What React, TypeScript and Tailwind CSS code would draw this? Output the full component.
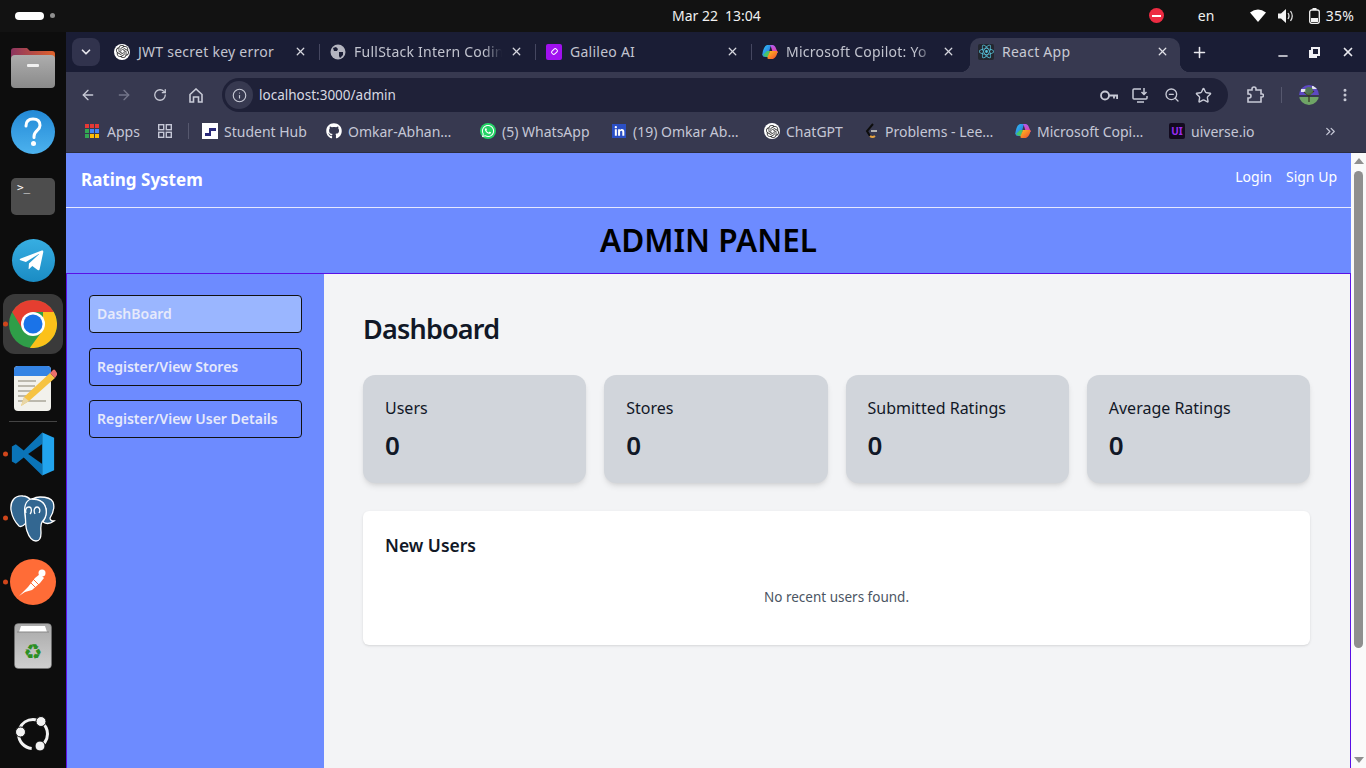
import React from "react";
import { ArrowLeft, ArrowRight, RotateCw, Info, Star, Plus, X, Minus, ChevronDown, ChevronsRight, EllipsisVertical, ZoomOut } from "lucide-react";
import { FaGithub, FaWhatsapp, FaTelegramPlane } from "react-icons/fa";
import { FaLinkedinIn } from "react-icons/fa6";
import { SiOpenai, SiReact } from "react-icons/si";

function Copilot({ size = 16 }: { size?: number }) {
  return (
    <svg width={size} height={size} viewBox="0 0 16 16">
      <defs>
        <linearGradient id="cpa" x1="0" y1="0" x2="1" y2="1"><stop offset="0" stopColor="#2fc6f2" /><stop offset="1" stopColor="#2a5fe0" /></linearGradient>
        <linearGradient id="cpb" x1="0" y1="0" x2="0" y2="1"><stop offset="0" stopColor="#b05cf0" /><stop offset="1" stopColor="#ec3d9e" /></linearGradient>
        <linearGradient id="cpc" x1="0" y1="0" x2="1" y2="1"><stop offset="0" stopColor="#ffc220" /><stop offset="1" stopColor="#f0492e" /></linearGradient>
      </defs>
      <path d="M5 1h4L7 8 5.500 13H3Q.5 13 .3 10.500 1.500 2 5 1Z" fill="url(#cpa)" />
      <path d="M1 11 5 7h3l-2 6Q3 13.500 1 11Z" fill="#46c46b" />
      <path d="M8 1h2.500Q13 1 14 4.500L16 9 11 9 9 3Z" fill="url(#cpb)" />
      <path d="M8 7h7.500Q15 13 11 15H6.500Q5 15 5.500 13Z" fill="url(#cpc)" />
    </svg>
  );
}

function OpenAi() {
  return (
    <span className="flex h-4 w-4 shrink-0 items-center justify-center rounded-full bg-white text-[#333]">
      <SiOpenai size={13} />
    </span>
  );
}

function Tab({ icon, title, fade, noSep }: { icon: React.ReactNode; title: string; fade?: boolean; noSep?: boolean }) {
  return (
    <div className="flex h-full w-[216px] shrink-0 items-center pb-[7px] pl-2 pr-[3px] text-[#c2c4cf]">
      <span className="flex w-4 shrink-0 items-center justify-center">{icon}</span>
      <span className={"ml-2 w-[148px] shrink-0 whitespace-nowrap text-[14px] tracking-[0.25px] " + (fade ? "[mask-image:linear-gradient(to_right,black_88%,transparent)]" : "")}>{title}</span>
      <X size={13} strokeWidth={2.4} className="ml-2 shrink-0 text-[#d5d6de]" />
      {!noSep && <span className="ml-[12px] h-[16px] w-px shrink-0 bg-[#454760]" />}
    </div>
  );
}

function Dot() {
  return <span className="absolute left-[3px] top-1/2 h-[5px] w-[5px] -translate-y-1/2 rounded-full bg-[#d0461b]" />;
}

function Slot({ children, dot }: { children: React.ReactNode; dot?: boolean }) {
  return (
    <div className="relative flex h-[64px] w-full shrink-0 items-center justify-center">
      {dot && <Dot />}
      {children}
    </div>
  );
}

function Dock() {
  return (
    <div className="flex w-[66px] shrink-0 flex-col bg-[#0d0d0d] pt-1">
      <Slot>
        <svg width="46" height="42" viewBox="0 0 46 42">
          <defs>
            <linearGradient id="fdt" x1="0" y1="0" x2="1" y2="0"><stop offset="0" stopColor="#8c3560" /><stop offset="1" stopColor="#e0622a" /></linearGradient>
            <linearGradient id="fdb" x1="0" y1="0" x2="0" y2="1"><stop offset="0" stopColor="#adadad" /><stop offset="1" stopColor="#8a8a8a" /></linearGradient>
          </defs>
          <path d="M4 1h13l3 3h22q3 0 3 3v12H1V4q0-3 3-3Z" fill="url(#fdt)" />
          <rect x="1" y="8" width="44" height="33" rx="4" fill="url(#fdb)" />
          <rect x="17" y="17" width="12" height="3" rx="1" fill="#f1f1f1" />
        </svg>
      </Slot>
      <Slot>
        <svg width="44" height="44" viewBox="0 0 44 44">
          <defs>
            <linearGradient id="hlp" x1="0" y1="0" x2="0" y2="1"><stop offset="0" stopColor="#2389d6" /><stop offset="1" stopColor="#4cb2ee" /></linearGradient>
          </defs>
          <circle cx="22" cy="22" r="22" fill="url(#hlp)" />
          <path d="M15 16q0-7 7-7t7 6.500c0 5-6 5-6 11v1" fill="none" stroke="#fff" strokeWidth="3" strokeLinecap="round" />
          <circle cx="22.500" cy="33.500" r="2.500" fill="#fff" />
        </svg>
      </Slot>
      <Slot>
        <div className="flex h-[37px] w-[44px] items-start rounded-[5px] bg-[#4d4d4d] px-[6px] pt-[3px] text-[11px] leading-[14px] text-white [font-family:'DejaVu_Sans_Mono',monospace]">&gt;_</div>
      </Slot>
      <Slot>
        <div className="flex h-[43px] w-[43px] items-center justify-center rounded-full bg-gradient-to-b from-[#37aee2] to-[#1a8cc4] text-white">
          <FaTelegramPlane size={27} className="-ml-1" />
        </div>
      </Slot>
      <Slot dot>
        <div className="flex h-[60px] w-[60px] items-center justify-center rounded-xl bg-[#3a3a3a]">
          <svg width="48" height="48" viewBox="0 0 48 48">
            <circle cx="24" cy="24" r="24" fill="#2f9e48" />
            <path d="M34 12H44.800A24 24 0 0 1 20.900 47.800L34 30Z" fill="#fcc11a" />
            <path d="M24 0A24 24 0 0 1 44.800 12H24L14 30 3.200 12A24 24 0 0 1 24 0Z" fill="#e53e30" />
            <circle cx="24" cy="24" r="12" fill="#fff" />
            <circle cx="24" cy="24" r="9.500" fill="#1a73e8" />
          </svg>
        </div>
      </Slot>
      <Slot>
        <svg className="ml-[4px]" width="44" height="46" viewBox="0 0 44 46">
          <rect x="1" y="1" width="37" height="45" rx="4" fill="#f2f1ec" />
          <path d="M5 1h29q4 0 4 4v6H1V5q0-4 4-4Z" fill="#3584e4" />
          <path d="M5 16h18M5 21h17M5 26h14M5 31h10M5 36h10M14 36h19" stroke="#bcb9ae" strokeWidth="2" />
          <path d="M37 8 42 13 16 36 8 41l3-9Z" fill="#f6c342" />
          <path d="M37 8l3-3q1-1 2 0l2 3q1 1 0 2l-2 3Z" fill="#ed6f6b" />
          <path d="M11 32l5 4-8 5Z" fill="#e8d6a8" />
        </svg>
      </Slot>
      <div className="mx-auto h-px w-[48px] shrink-0 bg-[#444] my-[0.5px]" />
      <Slot dot>
        <svg width="44" height="44" viewBox="0 0 100 100">
          <path d="M71 1 29 42 11 28l-9 5v34l9 5 18-14 42 41Z" fill="#0a74b8" />
          <path d="M71 27v46L39 50Z" fill="#0d0d0d" />
          <path d="M71 1 98 13v74L71 99Z" fill="#22a4ee" />
        </svg>
      </Slot>
      <Slot dot>
        <svg width="48" height="49" viewBox="0 0 48 49" stroke="#fff" strokeWidth="1.300" fill="#336791">
          <path d="M14 2C6 1 1 7 2 16c1 6 4 12 8 16 3 2 5-1 7-3l-1-10c0-6 2-10 6-13C20 4 17 2 14 2Z" />
          <path d="M31 3c-3 0-6 1-8 2 6 0 12 3 14 10 1 5-1 9-3 13 3 2 7 2 11-1-3 0-4-1-4-3 3-5 5-11 3-16-2-4-7-5-13-5Z" />
          <path d="M22 5c-6 2-7 9-6 14 1 6 0 13 2 18 2 6 5 10 9 10s5-4 5-8c0-4-1-8 1-11 3-3 5-8 4-13-1-6-5-10-15-10Z" />
          <path d="M17 19c-1-3 0-6 3-6s3 5 1 7M30 19c2-3 0-6-2-6s-4 3-2 7" fill="none" />
        </svg>
      </Slot>
      <Slot dot>
        <div className="flex h-[46px] w-[46px] items-center justify-center rounded-full bg-[#ff6c37]">
          <svg width="34" height="34" viewBox="0 0 34 34">
            <path d="M3 31 12 22l7-9 5-4 4 4-4 5-8 7-7 2Z" fill="#fff" />
            <circle cx="26" cy="8" r="3.500" fill="#fff" />
            <path d="M14 17l6 6M17 14l6 6" stroke="#ff6c37" strokeWidth="1" />
          </svg>
        </div>
      </Slot>
      <Slot>
        <svg width="38" height="46" viewBox="0 0 38 46">
          <defs>
            <linearGradient id="trs" x1="0" y1="0" x2="0" y2="1"><stop offset="0" stopColor="#a8a8a8" /><stop offset="1" stopColor="#cfcfcf" /></linearGradient>
          </defs>
          <rect x="0.500" y="0.500" width="37" height="45" rx="4" fill="url(#trs)" stroke="#777" strokeWidth="0.500" />
          <path d="M5 9l2-6h24l2 6Z" fill="#fff" />
          <path d="M3 9h32" stroke="#888" strokeWidth="1" />
          <text x="19" y="36" textAnchor="middle" fontSize="21" fill="#2a8f23" fontFamily="'DejaVu Sans',sans-serif">♻</text>
        </svg>
      </Slot>
      <div className="mt-auto mb-[2px] flex h-[64px] items-center justify-center">
        <svg width="36" height="36" viewBox="0 0 36 36" fill="none">
          <circle cx="18" cy="18" r="14.500" stroke="#f2f2f2" strokeWidth="3" strokeDasharray="21 6" strokeDashoffset="3" />
          <circle cx="5.500" cy="16" r="5" fill="#f2f2f2" stroke="#0d0d0d" strokeWidth="1" />
          <circle cx="26" cy="5.500" r="5" fill="#f2f2f2" stroke="#0d0d0d" strokeWidth="1" />
          <circle cx="25" cy="30" r="5" fill="#f2f2f2" stroke="#0d0d0d" strokeWidth="1" />
        </svg>
      </div>
    </div>
  );
}

function TopBar() {
  return (
    <div className="flex h-8 shrink-0 items-center bg-[#121212] pb-px pl-[15px] pr-3 text-[14px] text-[#f0f0f0]">
      <div className="flex w-[300px] items-center gap-[6px]">
        <span className="h-2 w-[29px] rounded-full bg-white" />
        <span className="h-[5px] w-[5px] rounded-full bg-[#8f8f8f]" />
      </div>
      <div className="ml-[357px] flex gap-[7px]"><span>Mar 22</span><span>13:04</span></div>
      <div className="ml-auto flex items-center">
        <span className="flex h-[15px] w-[15px] items-center justify-center rounded-full bg-[#ed2b42]"><span className="h-[2px] w-[9px] bg-white" /></span>
        <span className="ml-[34px] w-[16px]">en</span>
        <svg className="ml-[36px]" width="16" height="13" viewBox="0 0 16 13"><path d="M0 3.500Q8-2.500 16 3.500L8 13Z" fill="#fff" /></svg>
        <svg className="ml-[12px]" width="16" height="14" viewBox="0 0 16 14" fill="none"><path d="M0 4.500h3L8 0v14L3 9.500H0Z" fill="#f2f2f2" /><path d="M10 4q2 3 0 6M12.500 2q3.500 5 0 10" stroke="#ddd" strokeWidth="1.300" /></svg>
        <svg className="ml-[15px]" width="11" height="16" viewBox="0 0 11 16" fill="none"><rect x="0.700" y="2" width="9.600" height="13.300" rx="2" stroke="#f2f2f2" strokeWidth="1.300" /><rect x="3.500" y="0" width="4" height="2" fill="#f2f2f2" /><rect x="2" y="10" width="7" height="4" fill="#f2f2f2" /></svg>
        <span className="ml-[6px] tracking-[0.2px]">35%</span>
      </div>
    </div>
  );
}

function TabStrip() {
  return (
    <div className="flex h-10 shrink-0 items-end bg-[#1a1d35]">
      <div className="mb-[6px] ml-[6px] flex h-[28px] w-[28px] shrink-0 items-center justify-center rounded-lg bg-[#31334d] text-[#e6e6ec]">
        <ChevronDown size={14} strokeWidth={3} />
      </div>
      <div className="ml-[6px] flex h-[34px]">
        <Tab icon={<OpenAi />} title="JWT secret key error" />
        <Tab icon={<svg width="16" height="16" viewBox="0 0 16 16"><circle cx="8" cy="8" r="7.500" fill="#b4b5c0" /><path d="M3 4l3-1 2 2-1 2-3 0Zm6 4h4l0 3-3 3-1-2Z" fill="#1a1d35" /></svg>} title="FullStack Intern Codin" fade />
        <Tab icon={<span className="flex h-4 w-4 items-center justify-center rounded-[2px] bg-[#a010f0]"><span className="h-[7px] w-[5px] rotate-45 rounded-[2px] border border-white" /></span>} title="Galileo AI" />
        <Tab icon={<Copilot />} title="Microsoft Copilot: Yo" fade noSep />
        <div className="relative flex h-full w-[210px] shrink-0 items-center rounded-t-[10px] bg-[#373950] pb-[7px] pl-2 pr-[11px] text-[#c8cad4]">
          <span className="absolute bottom-0 left-[-10px] h-[10px] w-[10px] bg-[radial-gradient(circle_at_0_0,transparent_10px,#373950_10.5px)]" />
          <span className="absolute bottom-0 right-[-10px] h-[10px] w-[10px] bg-[radial-gradient(circle_at_100%_0,transparent_10px,#373950_10.5px)]" />
          <span className="flex h-4 w-4 shrink-0 items-center justify-center rounded-[2px] bg-[#23272f] text-[#58c4dc]"><SiReact size={15} /></span>
          <span className="ml-2 flex-1 text-[14px] tracking-[0.25px]">React App</span>
          <X size={13} strokeWidth={2.4} className="text-[#e0e1e7]" />
        </div>
      </div>
      <div className="mb-[6px] flex h-[28px] flex-1 items-center text-[#e8e8ee]">
        <Plus size={17} strokeWidth={2.2} className="ml-[11px]" />
        <Minus size={14} strokeWidth={2.6} className="ml-[68px] mt-2" />
        <svg className="ml-[19px]" width="11" height="11" viewBox="0 0 11 11" fill="none" stroke="#f0f0f4" strokeWidth="2"><path d="M3 1h7v7H3Z" /><path d="M1 3v7h7" /></svg>
        <X size={14} strokeWidth={3} className="ml-[21px]" />
      </div>
    </div>
  );
}

function Toolbar() {
  return (
    <div className="flex h-10 shrink-0 items-center bg-[#373950] pt-[6px] text-[#c8cad6]">
      <ArrowLeft size={16} strokeWidth={2} className="ml-[14px]" />
      <ArrowRight size={16} strokeWidth={2} className="ml-[20px] text-[#74768a]" />
      <RotateCw size={14} strokeWidth={2.2} className="ml-[21px]" />
      <svg className="ml-[22px]" width="14" height="15" viewBox="0 0 14 15" fill="none" stroke="#c8cad6" strokeWidth="1.600"><path d="M1 6.500 7 1l6 5.500V14H9.500V9h-5v5H1Z" /></svg>
      <div className="ml-[19px] flex h-[34px] w-[1006px] items-center rounded-full bg-[#1f2138]">
        <span className="ml-[3px] flex h-[28px] w-[28px] items-center justify-center rounded-full bg-[#373950]">
          <Info size={15} strokeWidth={1.8} />
        </span>
        <span className="ml-[6px] flex-1 text-[13.500px] text-[#d8d9e2]">localhost:3000/admin</span>
        <svg className="mr-px -ml-px" width="18" height="11" viewBox="0 0 18 11" fill="none" stroke="#c8cad6" strokeWidth="1.800"><circle cx="5" cy="5.500" r="4" /><path d="M9 5.500h8.100v3.500M14 5.500v3" /></svg>
        <svg className="ml-[13px]" width="17" height="15" viewBox="0 0 17 15" fill="none" stroke="#c8cad6" strokeWidth="1.500"><path d="M9 1H2q-1 0-1 1v8q0 1 1 1h12q1 0 1-1V8M5 14h7M12 0v6M9.500 4 12 6.500 14.500 4" /></svg>
        <ZoomOut size={16} strokeWidth={2} className="ml-[15px]" />
        <Star size={17} strokeWidth={2} className="ml-[15px] mr-[16px]" />
      </div>
      <svg className="ml-[18px]" width="18" height="18" viewBox="0 0 18 18" fill="none" stroke="#c8cad6" strokeWidth="1.600"><path d="M2 4h4V3a2 2 0 0 1 4 0v1h5v4h1a1.500 1.500 0 0 1 0 3h-1v5H2v-4h1a2 2 0 0 0 0-4H2Z" /></svg>
      <span className="ml-[17px] h-[16px] w-px bg-[#56586e]" />
      <svg className="ml-[17px]" width="20" height="20" viewBox="0 0 20 20">
        <defs><clipPath id="avc"><circle cx="10" cy="10" r="10" /></clipPath></defs>
        <g clipPath="url(#avc)">
          <rect width="20" height="10" fill="#5d49c2" />
          <rect y="12" width="20" height="8" fill="#6fa566" />
          <path d="M2 4h5v3H2Zm11-3h5v3h-5Z" fill="#e4e6ef" />
          <path d="M10 17V8M10 11 5 7M10 10l5-4" stroke="#3a3628" strokeWidth="1.300" />
          <circle cx="10" cy="6" r="4" fill="#4f7f3c" opacity="0.8" />
        </g>
      </svg>
      <EllipsisVertical size={16} strokeWidth={2.5} className="ml-[18px]" />
    </div>
  );
}

function Bm({ icon, label, className }: { icon: React.ReactNode; label: string; className: string }) {
  return (
    <div className={"flex shrink-0 items-center whitespace-nowrap " + className}>
      <span className="flex w-4 shrink-0 items-center justify-center">{icon}</span>
      <span className="ml-[6px]">{label}</span>
    </div>
  );
}

function Bookmarks() {
  return (
    <div className="flex h-[41px] shrink-0 items-center border-b border-[#2b2d3e] bg-[#373950] pb-[2px] text-[14px] text-[#c5c7d6]">
      <svg className="ml-[19px]" width="14" height="14" viewBox="0 0 14 14">
        <path d="M0 0h4v4H0Z" fill="#e53935" /><path d="M5 0h4v4H5Z" fill="#e53935" /><path d="M10 0h4v4h-4Z" fill="#e53935" />
        <path d="M0 5h4v4H0Z" fill="#34a853" /><path d="M5 5h4v4H5Z" fill="#4285f4" /><path d="M10 5h4v4h-4Z" fill="#4285f4" />
        <path d="M0 10h4v4H0Z" fill="#34a853" /><path d="M5 10h4v4H5Z" fill="#fbbc05" /><path d="M10 10h4v4h-4Z" fill="#fbbc05" />
      </svg>
      <span className="ml-2 w-[34px]">Apps</span>
      <svg className="ml-[17px]" width="14" height="14" viewBox="0 0 14 14" fill="none" stroke="#c5c7d6" strokeWidth="1.400"><rect x="0.700" y="0.700" width="5" height="5" /><rect x="8.300" y="0.700" width="5" height="5" /><rect x="0.700" y="8.300" width="5" height="5" /><rect x="8.300" y="8.300" width="5" height="5" /></svg>
      <span className="ml-[16px] h-[16px] w-px bg-[#56586e]" />
      <Bm className="ml-[13px] w-[124px]" label="Student Hub" icon={<svg width="16" height="16" viewBox="0 0 16 16"><rect width="16" height="16" fill="#fff" /><path d="M3 10h4V5h7v3H9v5H3Z" fill="#2b2a7a" /></svg>} />
      <Bm className="w-[154px]" label="Omkar-Abhan…" icon={<FaGithub size={16} className="text-white" />} />
      <Bm className="w-[131px]" label="(5) WhatsApp" icon={<span className="flex h-4 w-4 items-center justify-center rounded-full bg-[#25d366] text-white"><FaWhatsapp size={14} /></span>} />
      <Bm className="w-[153px]" label="(19) Omkar Ab…" icon={<span className="flex h-[14px] w-[14px] items-center justify-center bg-[#2b4fc4] text-white"><FaLinkedinIn size={11} /></span>} />
      <Bm className="w-[99px]" label="ChatGPT" icon={<OpenAi />} />
      <Bm className="w-[152px]" label="Problems - Lee…" icon={<svg width="16" height="16" viewBox="0 0 16 16" fill="none" strokeWidth="2"><path d="M10 1 4 8l3 5" stroke="#0d0d0d" /><path d="M7 13q2.500 2 5 0" stroke="#e8a33d" /><path d="M8 8h6" stroke="#b3b3b3" /></svg>} />
      <Bm className="w-[154px]" label="Microsoft Copi…" icon={<Copilot />} />
      <Bm className="w-[100px]" label="uiverse.io" icon={<span className="flex h-4 w-4 items-center justify-center rounded-[2px] bg-[#120a1e] text-[10px] font-bold leading-none text-[#9a2cf0]">UI</span>} />
      <ChevronsRight size={15} strokeWidth={2} className="ml-[54px]" />
    </div>
  );
}

function Stat({ label }: { label: string }) {
  return (
    <div className="flex h-[108px] flex-col rounded-xl bg-[#d1d5db] px-[22px] pt-[23px] shadow-md">
      <span className="text-[16px] leading-5 text-[#111827]">{label}</span>
      <span className="mt-[13px] text-[26px] font-semibold leading-7 text-[#111827]">0</span>
    </div>
  );
}

function Scrollbar() {
  return (
    <div className="flex w-[15px] shrink-0 flex-col items-center bg-[#fafafa] pt-[5px]">
      <div className="h-0 w-0 border-x-[5px] border-b-[6px] border-x-transparent border-b-[#8f8f8f]" />
      <div className="mt-[7px] h-[477px] w-[9px] rounded-full bg-[#8f8f8f]" />
      <div className="mt-auto mb-[5px] h-0 w-0 border-x-[5px] border-t-[6px] border-x-transparent border-t-[#8f8f8f]" />
    </div>
  );
}

function Page() {
  return (
    <div className="flex min-h-0 flex-1">
      <div className="flex min-w-0 flex-1 flex-col bg-[#6d8bff]">
        <div className="flex h-[55px] shrink-0 items-center justify-between border-b border-[#e6e9ff] pl-[15px] pr-[14px]">
          <span className="text-[17px] font-bold text-white">Rating System</span>
          <div className="-mt-[8px] flex gap-[14px] text-[14px] text-white">
            <span>Login</span>
            <span>Sign Up</span>
          </div>
        </div>
        <div className="flex h-[65px] shrink-0 items-center justify-center pb-[2px] text-[31.500px] font-semibold text-black">ADMIN PANEL</div>
        <div className="flex min-h-0 flex-1 border border-b-0 border-[#5a10e6]">
          <div className="flex w-[257px] shrink-0 flex-col px-[22px] pt-[21px] text-[14px] font-semibold text-[#e6e9fb]">
            <div className="mb-[15px] flex h-[38px] items-center rounded-[4px] border border-[#111] bg-[#9ab6ff] px-[7px] pb-[2px]">DashBoard</div>
            <div className="mb-[14px] flex h-[38px] items-center rounded-[4px] border border-[#111] px-[7px] pb-[2px]">Register/View Stores</div>
            <div className="flex h-[38px] items-center rounded-[4px] border border-[#111] px-[7px] pb-[2px]">Register/View User Details</div>
          </div>
          <div className="flex-1 bg-[#f3f4f6] pl-[39px] pr-[40px] pt-[35px]">
            <h1 className="text-[27px] font-semibold leading-[40px] tracking-[-0.8px] text-[#111827]">Dashboard</h1>
            <div className="mt-[26px] grid grid-cols-4 gap-[18px]">
              <Stat label="Users" />
              <Stat label="Stores" />
              <Stat label="Submitted Ratings" />
              <Stat label="Average Ratings" />
            </div>
            <div className="mt-[28px] h-[134px] rounded-md bg-white px-[22px] pt-[22px] shadow">
              <h2 className="text-[17.500px] font-semibold leading-6 text-[#111827]">New Users</h2>
              <p className="mt-[30px] text-center text-[13.500px] leading-5 text-[#4b5563]">No recent users found.</p>
            </div>
          </div>
        </div>
      </div>
      <Scrollbar />
    </div>
  );
}

export default function App() {
  return (
    <div className="flex h-[768px] w-[1366px] flex-col overflow-hidden bg-black [font-family:'Noto_Sans',sans-serif]">
      <TopBar />
      <div className="flex min-h-0 flex-1">
        <Dock />
        <div className="flex min-w-0 flex-1 flex-col">
          <TabStrip />
          <Toolbar />
          <Bookmarks />
          <Page />
        </div>
      </div>
    </div>
  );
}
